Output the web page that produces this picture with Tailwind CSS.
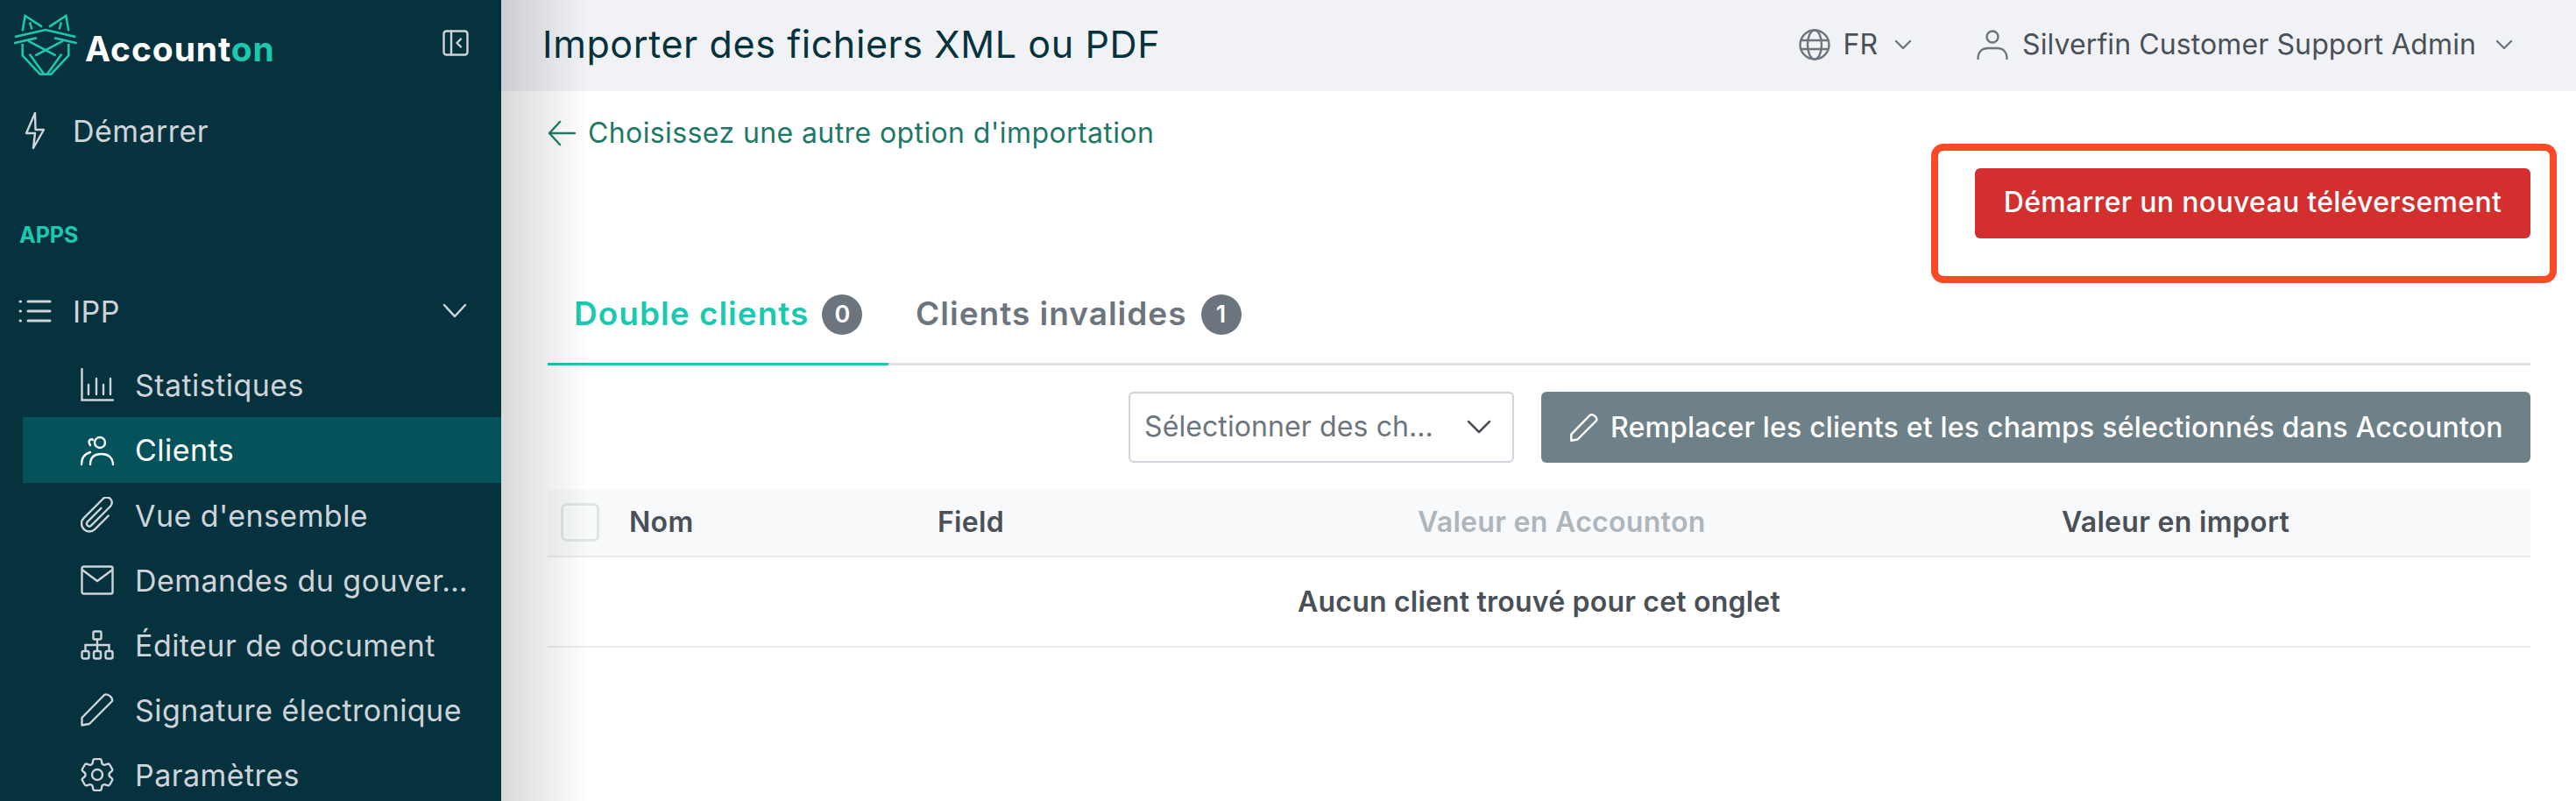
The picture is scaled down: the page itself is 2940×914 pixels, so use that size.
<!DOCTYPE html>
<html lang="fr">

<head>
    <meta charset="UTF-8">
    <meta name="viewport" content="width=device-width, initial-scale=1.0">
    <script src="https://cdn.jsdelivr.net/npm/@tailwindcss/browser@4"></script>
    <title>Accounton</title>
</head>

<body class="h-screen overflow-hidden bg-white [font-family:Inter,sans-serif]">
    <div class="flex h-[914px]">

        <!-- sidebar -->
        <aside class="w-[572px] h-full shrink-0 overflow-hidden bg-[#06323d] text-[#ced4da] text-[34px] tracking-[0.45px]">
            <div class="h-[104px] pl-[15px] pr-[37px] pt-[16px] flex items-start justify-between">
                <div class="flex items-start">
                    <svg class="w-[74px] h-[71px]" viewBox="45 48 220 213" fill="none" stroke="#1bc9b0" stroke-width="7.500">
                        <path d="M76 106 85 54 143 92M101 76 108 100M234 106 225 54 167 92M209 76 202 100" />
                        <path d="M50 126 155 102 258 126M47 148 125 130M262 148 185 130" />
                        <path d="M76 150V190L136 254H174L234 190V150M95 140 190 190M215 140 120 190M100 185 150 254M210 185 160 254" />
                    </svg>
                    <span class="ml-[8px] mt-[18px] text-[39px] leading-[44px] font-bold text-white tracking-[0.9px]">Account<span class="text-[#1bc9b0]">on</span></span>
                </div>
                <svg class="w-[30px] h-[30px] mt-[18px]" viewBox="0 0 30 30" fill="none" stroke="#ced4da" stroke-width="2.4" stroke-linecap="round" stroke-linejoin="round">
                    <rect x="1.5" y="1.5" width="27" height="27" rx="3" />
                    <path d="M10 1.5V28.500M21 10.500 16.500 15 21 19.500" />
                </svg>
            </div>

            <div class="h-[90px] pl-[28px] flex items-center">
                <svg class="w-[24px] h-[44px]" viewBox="0 0 24 44" fill="none" stroke="#ced4da" stroke-width="2.400" stroke-linejoin="round">
                    <path d="M12 2 2 25H12L10 42 22 21H12.500Z" />
                </svg>
                <span class="ml-[31px]">Démarrer</span>
            </div>

            <div class="h-[117px] pl-[22px] pt-[59px] text-[#1bc9b0] text-[25px] leading-[30px] font-bold tracking-normal">APPS</div>

            <div class="h-[88px] mb-[3px] pl-[21px] pr-[39px] flex items-center">
                <svg class="w-[38px] h-[30px]" viewBox="0 0 38 30" fill="none" stroke="#ced4da" stroke-width="3" stroke-linecap="round">
                    <path d="M11 4H36M11 15H36M11 26H36M2 4H2.500M2 15H2.500M2 26H2.500" />
                </svg>
                <span class="ml-[24px]">IPP</span>
                <svg class="ml-auto w-[28px] h-[18px]" viewBox="0 0 28 18" fill="none" stroke="#ced4da" stroke-width="2.500" stroke-linecap="round" stroke-linejoin="round">
                    <path d="M2 2 14 15 26 2" />
                </svg>
            </div>

            <a class="h-[74px] pl-[92px] flex items-center">
                <svg class="w-[38px] h-[38px] shrink-0" viewBox="0 0 38 38" fill="none" stroke="#ced4da" stroke-width="2.400" stroke-linecap="round">
                    <path d="M1.500 1V36.500H37M9 19V30M18 12V30M26 19V30M34 12V30" />
                </svg>
                <span class="ml-[24px]">Statistiques</span>
            </a>
            <a class="h-[75px] ml-[26px] pl-[66px] flex items-center bg-[#04535a] text-white">
                <svg class="w-[38px] h-[34px] shrink-0" viewBox="0 0 38 34" fill="none" stroke="white" stroke-width="2.400" stroke-linecap="round">
                    <circle cx="22" cy="8" r="6" />
                    <path d="M11 33C11 25 16 21 24 21C31 21 37 25 37 33M11 11C7 5 13 3 14 5M1 33C1 26 4 21 11 19" />
                </svg>
                <span class="ml-[24px]">Clients</span>
            </a>
            <a class="h-[74px] pl-[92px] flex items-center">
                <svg class="w-[38px] h-[42px] shrink-0" viewBox="2.500 2 19 21" fill="none" stroke="#ced4da" stroke-width="1.200" stroke-linecap="round" stroke-linejoin="round">
                    <path d="m18.375 12.739-7.693 7.693a4.500 4.500 0 0 1-6.364-6.364l10.940-10.940A3 3 0 1 1 19.500 7.372L8.552 18.320m.009-.010-.010.010m5.699-9.941-7.810 7.810a1.500 1.500 0 0 0 2.112 2.130" />
                </svg>
                <span class="ml-[24px]">Vue d'ensemble</span>
            </a>
            <a class="h-[74px] pl-[92px] flex items-center">
                <svg class="w-[38px] h-[34px] shrink-0" viewBox="0 0 38 34" fill="none" stroke="#ced4da" stroke-width="2.400" stroke-linejoin="round">
                    <rect x="1.500" y="1.500" width="35" height="31" rx="2" />
                    <path d="M1.500 5 19 18 36.500 5" />
                </svg>
                <span class="ml-[24px] whitespace-nowrap">Demandes du gouver…</span>
            </a>
            <a class="h-[74px] pl-[92px] flex items-center">
                <svg class="w-[38px] h-[34px] shrink-0" viewBox="0 0 38 34" fill="none" stroke="#ced4da" stroke-width="2.400">
                    <rect x="14.500" y="1.500" width="9" height="9" rx="1.500" />
                    <rect x="1.500" y="24" width="8" height="8.500" rx="2" />
                    <rect x="15" y="24" width="8" height="8.500" rx="2" />
                    <rect x="28.500" y="24" width="8" height="8.500" rx="2" />
                    <path d="M19 10.500V24M5.500 24V17H32.500V24" />
                </svg>
                <span class="ml-[24px]">Éditeur de document</span>
            </a>
            <a class="h-[74px] pl-[92px] flex items-center">
                <svg class="w-[38px] h-[38px] shrink-0" viewBox="0 0 38 38" fill="none" stroke="#ced4da" stroke-width="2.400" stroke-linejoin="round">
                    <path d="M1.500 28 27 2C30 0 37 4 36 9L10 35 1.500 36.500Z" />
                </svg>
                <span class="ml-[24px]">Signature électronique</span>
            </a>
            <a class="h-[74px] pl-[92px] flex items-center">
                <svg class="w-[38px] h-[38px] shrink-0" viewBox="2.500 2.500 19 19" fill="none" stroke="#ced4da" stroke-width="1.200" stroke-linecap="round" stroke-linejoin="round">
                    <path d="M9.594 3.940c.09-.542.560-.940 1.110-.940h2.593c.550 0 1.020.398 1.110.940l.213 1.281c.063.374.313.686.645.870.074.040.147.083.220.127.324.196.720.257 1.075.124l1.217-.456a1.125 1.125 0 0 1 1.370.490l1.296 2.247a1.125 1.125 0 0 1-.260 1.431l-1.003.827c-.293.240-.438.613-.431.992a6.759 6.759 0 0 1 0 .255c-.007.378.138.750.430.990l1.005.828c.424.350.534.954.260 1.430l-1.298 2.247a1.125 1.125 0 0 1-1.369.491l-1.217-.456c-.355-.133-.750-.072-1.076.124a6.570 6.570 0 0 1-.220.128c-.331.183-.581.495-.644.869l-.213 1.280c-.090.543-.560.941-1.110.941h-2.594c-.550 0-1.020-.398-1.110-.940l-.213-1.281c-.062-.374-.312-.686-.644-.870a6.520 6.520 0 0 1-.220-.127c-.325-.196-.720-.257-1.076-.124l-1.217.456a1.125 1.125 0 0 1-1.369-.490l-1.297-2.247a1.125 1.125 0 0 1 .260-1.431l1.004-.827c.292-.240.437-.613.430-.992a6.932 6.932 0 0 1 0-.255c.007-.378-.138-.750-.430-.990l-1.004-.828a1.125 1.125 0 0 1-.260-1.430l1.297-2.247a1.125 1.125 0 0 1 1.370-.491l1.216.456c.356.133.751.072 1.076-.124.072-.044.146-.087.220-.128.332-.183.582-.495.644-.869l.214-1.281Z" />
                    <circle cx="12" cy="12" r="3" />
                </svg>
                <span class="ml-[24px]">Paramètres</span>
            </a>
        </aside>

        <!-- main -->
        <div class="relative flex-1 min-w-0">
            <div class="absolute left-0 top-0 bottom-0 w-[100px] bg-gradient-to-r from-black/15 to-transparent pointer-events-none"></div>

            <header class="h-[104px] pl-[47px] pr-[72px] pb-[3px] bg-[#f0f2f6] flex items-center">
                <h1 class="text-[43px] tracking-[0.6px] text-[#06323d]">Importer des fichiers XML ou PDF</h1>
                <div class="ml-auto flex items-center text-[32px] tracking-[0.1px] text-[#495057]">
                    <svg class="w-[36px] h-[36px]" viewBox="0 0 36 36" fill="none" stroke="#6c757d" stroke-width="2.400">
                        <circle cx="18" cy="18" r="16.500" />
                        <ellipse cx="18" cy="18" rx="8" ry="16.500" />
                        <path d="M2 13H34M2 23H34" />
                    </svg>
                    <span class="ml-[14px]">FR</span>
                    <svg class="ml-[19px] w-[20px] h-[12px]" viewBox="0 0 20 12" fill="none" stroke="#6c757d" stroke-width="2.400" stroke-linecap="round" stroke-linejoin="round">
                        <path d="M2 2 10 10 18 2" />
                    </svg>
                    <svg class="ml-[74px] w-[36px] h-[34px]" viewBox="0 0 36 34" fill="none" stroke="#6c757d" stroke-width="2.400" stroke-linecap="round">
                        <circle cx="18" cy="8" r="6.500" />
                        <path d="M1.500 33C1.500 25 6 21 13 21H23C30 21 34.500 25 34.500 33" />
                    </svg>
                    <span class="ml-[16px]">Silverfin Customer Support Admin</span>
                    <svg class="ml-[22px] w-[20px] h-[12px]" viewBox="0 0 20 12" fill="none" stroke="#6c757d" stroke-width="2.400" stroke-linecap="round" stroke-linejoin="round">
                        <path d="M2 2 10 10 18 2" />
                    </svg>
                </div>
            </header>

            <main class="pl-[53px] pr-[52px]">
                <div class="relative h-[206px]">
                    <a class="pt-[28px] flex items-center text-[#1f7866] text-[32px] leading-[40px] tracking-[0.4px]">
                        <svg class="w-[32px] h-[30px]" viewBox="0 0 32 30" fill="none" stroke="#1f7866" stroke-width="2.500" stroke-linecap="round" stroke-linejoin="round">
                            <path d="M31 15H2M14 2 2 15 14 28" />
                        </svg>
                        <span class="ml-[14px]">Choisissez une autre option d'importation</span>
                    </a>
                    <!-- annotation drawn on top of the screenshot -->
                    <div class="absolute left-[1579px] top-[60px] w-[714px] h-[159px] border-[8px] border-[#f74a25] rounded-[14px]"></div>
                    <button class="absolute right-0 top-[88px] w-[634px] h-[80px] pb-[2px] rounded-[6px] bg-[#d32f2f] text-white text-[32px] font-medium tracking-[0.3px]">Démarrer un nouveau téléversement</button>
                </div>

                <div class="h-[107px] border-b-[3px] border-[#dee2e6] flex items-start text-[37px] font-semibold tracking-[1px]">
                    <div class="w-[389px] h-[107px] pl-[30px] pt-[25px] border-b-[3px] border-[#1bc9b0] flex items-start text-[#1bc9b0]">
                        <span class="leading-[46px]">Double clients</span>
                        <span class="ml-[15px] mt-[1px] w-[46px] h-[46px] rounded-full bg-[#6c757d] text-white text-[27px] tracking-normal flex items-center justify-center">0</span>
                    </div>
                    <div class="pl-[31px] pt-[25px] flex items-start text-[#6c757d]">
                        <span class="leading-[46px]">Clients invalides</span>
                        <span class="ml-[16px] mt-[1px] w-[46px] h-[46px] rounded-full bg-[#6c757d] text-white text-[27px] tracking-normal flex items-center justify-center">1</span>
                    </div>
                </div>

                <div class="mt-[30px] flex justify-end gap-[31px]">
                    <div class="w-[440px] h-[81px] pl-[16px] pr-[24px] pb-[1px] border-2 border-[#ced4da] rounded-[6px] flex items-center justify-between text-[#6c757d] text-[32px] tracking-[0.1px]">
                        <span class="whitespace-nowrap">Sélectionner des ch…</span>
                        <svg class="w-[28px] h-[16px]" viewBox="0 0 28 16" fill="none" stroke="#495057" stroke-width="2.500" stroke-linecap="round" stroke-linejoin="round">
                            <path d="M2 2 14 14 26 2" />
                        </svg>
                    </div>
                    <button class="w-[1129px] h-[81px] pl-[33px] rounded-[6px] bg-[#6f8188] text-white text-[32px] font-medium tracking-[0.2px] flex items-center">
                        <svg class="w-[32px] h-[32px] shrink-0" viewBox="0 0 38 38" fill="none" stroke="white" stroke-width="2.800" stroke-linejoin="round">
                            <path d="M1.500 28 27 2C30 0 37 4 36 9L10 35 1.500 36.500Z" />
                        </svg>
                        <span class="ml-[14px]">Remplacer les clients et les champs sélectionnés dans Accounton</span>
                    </button>
                </div>

                <div class="mt-[31px] h-[77px] pb-[2px] border-b-2 border-[#e9ecef] bg-[#f8f9fa] flex items-center text-[32px] font-semibold tracking-[0.3px] text-[#495057]">
                    <div class="ml-[15px] w-[44px] h-[44px] rounded-[7px] border-[3px] border-[#dee6e6] bg-[#f8faf9]"></div>
                    <span class="ml-[34px] w-[352px]">Nom</span>
                    <span class="w-[548px]">Field</span>
                    <span class="w-[735px] text-[#adb5bd]">Valeur en Accounton</span>
                    <span>Valeur en import</span>
                </div>
                <div class="h-[103px] border-b-2 border-[#e9ecef] flex items-center justify-center text-[32px] font-semibold tracking-[0.2px] text-[#495057]">Aucun client trouvé pour cet onglet</div>
            </main>
        </div>
    </div>
</body>

</html>
